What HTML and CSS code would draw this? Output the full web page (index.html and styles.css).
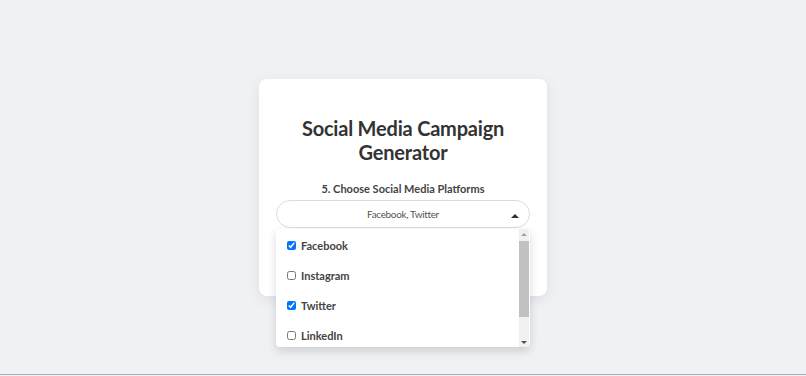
FILE: index.html
```html
<!DOCTYPE html>
<html lang="en">
<head>
<meta charset="utf-8">
<title>Social Media Campaign Generator</title>
<link rel="stylesheet" href="styles.css">
</head>
<body>
<div class="page">
  <div class="card">
    <h1 class="title">Social Media Campaign Generator</h1>
    <div class="field">
      <div class="label">5. Choose Social Media Platforms</div>
      <div class="select">
        <div class="select-box">
          <span class="select-value">Facebook, Twitter</span>
          <span class="caret"></span>
        </div>
        <div class="menu">
          <div class="menu-items">
            <label class="option"><input type="checkbox" checked><span>Facebook</span></label>
            <label class="option"><input type="checkbox"><span>Instagram</span></label>
            <label class="option"><input type="checkbox" checked><span>Twitter</span></label>
            <label class="option"><input type="checkbox"><span>LinkedIn</span></label>
            <label class="option"><input type="checkbox"><span>TikTok</span></label>
          </div>
          <div class="scrollbar">
            <span class="sb-arrow sb-up"></span>
            <div class="sb-track"><div class="sb-thumb"></div></div>
            <span class="sb-arrow sb-down"></span>
          </div>
        </div>
      </div>
    </div>
  </div>
</div>
</body>
</html>
```
FILE: styles.css
```css
html, body {
  margin: 0;
  padding: 0;
  background: #f0f1f5;
}
body {
  font-family: "Lato", "Open Sans", sans-serif;
  color: #333;
}
.page {
  min-height: calc(100vh - 1px);
  border-bottom: 1px solid #a9acb2;
  display: flex;
  align-items: center;
  justify-content: center;
  box-sizing: border-box;
  padding-top: 1px;
}
.card {
  width: 288px;
  box-sizing: border-box;
  background: #fff;
  border-radius: 8px;
  box-shadow: 0 4px 14px rgba(0, 0, 0, 0.08);
  padding: 37px 17px 68px;
}
.title {
  margin: 0 0 16px;
  font-size: 20px;
  line-height: 24px;
  font-weight: 700;
  letter-spacing: -0.2px;
  text-align: center;
  color: #333;
}
.field {
  display: flex;
  flex-direction: column;
  align-items: stretch;
}
.label {
  font-size: 11px;
  line-height: 16px;
  font-weight: 700;
  color: #444;
  text-align: center;
  margin-bottom: 3px;
  padding-top: 1px;
}
.select {
  position: relative;
}
.select-box {
  height: 28px;
  box-sizing: border-box;
  border: 1px solid #dcdcdc;
  border-radius: 15px;
  display: flex;
  align-items: center;
  justify-content: center;
  position: relative;
}
.select-value {
  font-size: 10px;
  letter-spacing: -0.35px;
  color: #555;
}
.caret {
  position: absolute;
  right: 10px;
  top: 13px;
  width: 0;
  height: 0;
  border-left: 4px solid transparent;
  border-right: 4px solid transparent;
  border-bottom: 4px solid #333;
}
.menu {
  position: absolute;
  left: 0;
  right: 0;
  top: 29px;
  height: 118px;
  background: #fff;
  border-radius: 0 0 4px 4px;
  box-shadow: 0 4px 10px rgba(0, 0, 0, 0.15);
  display: flex;
  overflow: hidden;
  z-index: 2;
}
.menu-items {
  flex: 1;
  overflow: hidden;
  padding-top: 1px;
}
.option {
  height: 30px;
  display: flex;
  align-items: center;
  padding-left: 11px;
  gap: 5px;
  font-size: 11px;
  font-weight: 700;
  color: #444;
}
.option input {
  width: 9px;
  height: 9px;
  margin: 0;
  accent-color: #0075ff;
}
.scrollbar {
  width: 10px;
  margin-right: 1px;
  background: #f1f1f1;
  display: flex;
  flex-direction: column;
  align-items: center;
}
.sb-arrow {
  height: 10px;
  width: 10px;
  display: flex;
  align-items: center;
  justify-content: center;
}
.sb-arrow::before {
  content: "";
  width: 0;
  height: 0;
  border-left: 3px solid transparent;
  border-right: 3px solid transparent;
}
.sb-up::before { border-bottom: 3px solid #a3a3a3; }
.sb-down::before { border-top: 3px solid #505050; }
.sb-track {
  flex: 1;
  width: 100%;
}
.sb-thumb {
  height: 76px;
  margin-top: 2px;
  background: #c1c1c1;
}
```
